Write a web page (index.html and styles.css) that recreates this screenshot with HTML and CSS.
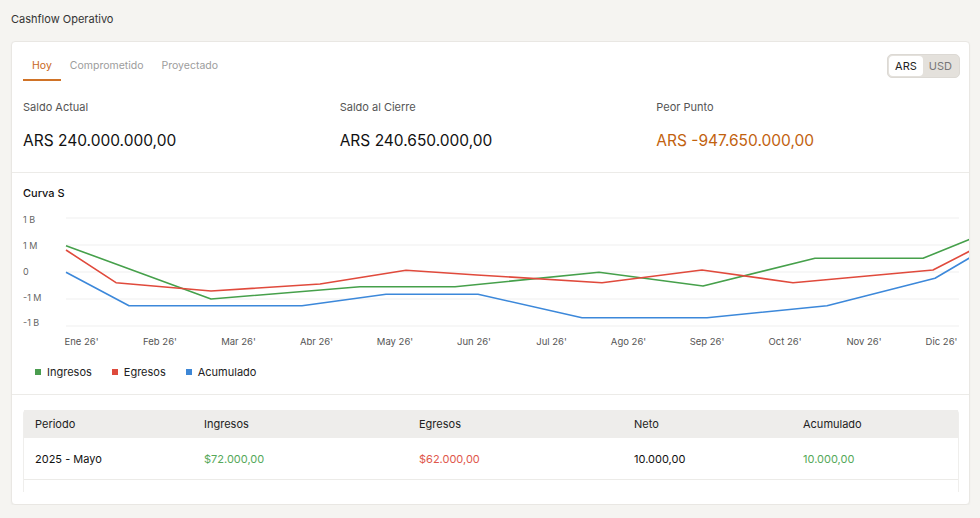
FILE: index.html
```html
<!DOCTYPE html>
<html lang="es">
<head>
    <meta charset="UTF-8">
    <meta name="viewport" content="width=device-width, initial-scale=1.0">
    <title>Cashflow Operativo</title>
    <link rel="stylesheet" href="styles.css">
</head>
<body>
    <h1 class="page-title">Cashflow Operativo</h1>

    <div class="card">
        <div class="card-header">
            <div class="tabs">
                <span class="tab active">Hoy</span>
                <span class="tab">Comprometido</span>
                <span class="tab">Proyectado</span>
            </div>
            <div class="currency-toggle">
                <span class="currency active">ARS</span>
                <span class="currency">USD</span>
            </div>
        </div>

        <div class="stats">
            <div class="stat">
                <div class="stat-label">Saldo Actual</div>
                <div class="stat-value">ARS 240.000.000,00</div>
            </div>
            <div class="stat">
                <div class="stat-label">Saldo al Cierre</div>
                <div class="stat-value">ARS 240.650.000,00</div>
            </div>
            <div class="stat">
                <div class="stat-label">Peor Punto</div>
                <div class="stat-value negative">ARS -947.650.000,00</div>
            </div>
        </div>

        <div class="chart-section">
            <h2 class="section-title">Curva S</h2>
            <svg class="chart" width="936" height="150" viewBox="0 0 936 150">
                <!-- grid -->
                <g stroke="#efefef" stroke-width="1">
                    <line x1="43" y1="12" x2="936" y2="12"/>
                    <line x1="43" y1="39" x2="936" y2="39"/>
                    <line x1="43" y1="66" x2="936" y2="66"/>
                    <line x1="43" y1="93" x2="936" y2="93"/>
                    <line x1="43" y1="120" x2="936" y2="120"/>
                </g>
                <g class="axis-y">
                    <text x="0" y="15">1 B</text>
                    <text x="0" y="41">1 M</text>
                    <text x="0" y="67">0</text>
                    <text x="0" y="93">-1 M</text>
                    <text x="0" y="118">-1 B</text>
                </g>
                <g class="axis-x">
                    <text x="58.5" y="136">Ene 26'</text>
                    <text x="137" y="136">Feb 26'</text>
                    <text x="215.5" y="136">Mar 26'</text>
                    <text x="293.5" y="136">Abr 26'</text>
                    <text x="372" y="136">May 26'</text>
                    <text x="451" y="136">Jun 26'</text>
                    <text x="528.5" y="136">Jul 26'</text>
                    <text x="605.5" y="136">Ago 26'</text>
                    <text x="684" y="136">Sep 26'</text>
                    <text x="762" y="136">Oct 26'</text>
                    <text x="841" y="136">Nov 26'</text>
                    <text x="918.5" y="136">Dic 26'</text>
                </g>
                <!-- series -->
                <polyline class="line green" points="43,39.7 188,93 337,80.7 432,80.7 576,66.3 680,80 792,52.3 900,52.3 947,33.3"/>
                <polyline class="line red" points="43,44 93,76.7 188,85 297,78 383,64.3 454,69 579,76.7 679,64 770,76.7 910,64 947,45"/>
                <polyline class="line blue" points="43,66.3 106,99.7 279,99.7 363,88.3 455,88.3 559,111.7 684,111.7 804,99.7 912,72.3 947,51.7"/>
            </svg>
            <div class="legend">
                <span class="legend-item"><i class="swatch green"></i>Ingresos</span>
                <span class="legend-item"><i class="swatch red"></i>Egresos</span>
                <span class="legend-item"><i class="swatch blue"></i>Acumulado</span>
            </div>
        </div>

        <div class="table-section">
            <div class="table-wrap">
                <table class="flow-table">
                    <colgroup>
                        <col style="width: 169px">
                        <col style="width: 215px">
                        <col style="width: 215px">
                        <col style="width: 169px">
                        <col>
                    </colgroup>
                    <thead>
                        <tr>
                            <th>Periodo</th>
                            <th>Ingresos</th>
                            <th>Egresos</th>
                            <th>Neto</th>
                            <th>Acumulado</th>
                        </tr>
                    </thead>
                    <tbody>
                        <tr>
                            <td>2025 - Mayo</td>
                            <td class="in">$72.000,00</td>
                            <td class="out">$62.000,00</td>
                            <td>10.000,00</td>
                            <td class="in">10.000,00</td>
                        </tr>
                    </tbody>
                </table>
            </div>
        </div>
    </div>
</body>
</html>
```

FILE: styles.css
```css
body {
    font-family: 'Inter', 'Noto Sans', sans-serif;
    background: #f5f4f1;
    margin: 0;
    padding: 12px 10px 0 11px;
    color: #222;
}
.page-title {
    font-size: 11px;
    font-weight: 400;
    line-height: 14px;
    color: #333;
    margin: 0 0 15px;
}
.card {
    background: #fff;
    border: 1px solid #e9e7e3;
    border-radius: 4px;
    box-shadow: 0 1px 2px rgba(0, 0, 0, 0.04);
    overflow: hidden;
}

/* header: tabs + currency */
.card-header {
    display: flex;
    justify-content: space-between;
    align-items: flex-start;
    padding: 12px 9px 0 11px;
}
.tabs {
    display: flex;
}
.tab {
    font-size: 10.5px;
    line-height: 14px;
    color: #9c9c9c;
    padding: 5px 9px 6px;
    border-bottom: 2px solid transparent;
}
.tab.active {
    color: #c8661a;
    border-bottom-color: #d07327;
}
.currency-toggle {
    display: flex;
    background: #e4e1dc;
    border: 1px solid #dcd9d4;
    border-radius: 5px;
    padding: 1px;
}
.currency {
    font-size: 11px;
    line-height: 20px;
    padding: 0 6px;
    color: #777;
    border-radius: 4px;
}
.currency.active {
    background: #fff;
    color: #222;
}

/* stats */
.stats {
    display: grid;
    grid-template-columns: repeat(3, 1fr);
    column-gap: 16px;
    padding: 19px 12px 21px 11px;
    border-bottom: 1px solid #ecebe8;
}
.stat-label {
    font-size: 11px;
    line-height: 14px;
    color: #555;
}
.stat-value {
    font-size: 15.5px;
    line-height: 20px;
    margin-top: 17px;
    color: #111;
}
.stat-value.negative {
    color: #c2620f;
}

/* chart */
.chart-section {
    padding: 13px 12px 15px 11px;
    border-bottom: 1px solid #ecebe8;
}
.section-title {
    font-size: 11px;
    font-weight: 500;
    line-height: 14px;
    margin: 0;
    color: #111;
}
.chart {
    display: block;
    margin-top: 6px;
    overflow: visible;
}
.axis-y text {
    font-size: 9px;
    fill: #666;
    dominant-baseline: middle;
}
.axis-x text {
    font-size: 9.5px;
    fill: #555;
    text-anchor: middle;
    dominant-baseline: middle;
}
.line {
    fill: none;
    stroke-width: 1.6;
    stroke-linejoin: round;
}
.line.green { stroke: #46a04b; }
.line.red { stroke: #e04a3c; }
.line.blue { stroke: #3c88da; }

.legend {
    display: flex;
    gap: 20px;
    margin-top: 9px;
    padding-left: 12px;
}
.legend-item {
    display: flex;
    align-items: center;
    font-size: 11px;
    line-height: 14px;
    color: #222;
}
.swatch {
    width: 6px;
    height: 6px;
    margin-right: 6px;
}
.swatch.green { background: #4a9d4f; }
.swatch.red { background: #de4a3c; }
.swatch.blue { background: #3d87d6; }

/* table */
.table-section {
    padding: 15px 10px 12px 11px;
}
.table-wrap {
    border-left: 1px solid #efeeec;
    border-right: 1px solid #efeeec;
    border-radius: 4px 4px 0 0;
    padding-bottom: 12px;
}
.flow-table {
    width: 100%;
    border-collapse: collapse;
    table-layout: fixed;
    font-size: 11px;
}
.flow-table th {
    background: #eeedeb;
    font-weight: 400;
    text-align: left;
    height: 28px;
    padding: 0 11px;
    color: #222;
}
.flow-table td {
    height: 41px;
    padding: 0 11px;
    border-bottom: 1px solid #ecebe8;
    color: #111;
}
.flow-table td.in { color: #55a859; }
.flow-table td.out { color: #e0574b; }
```
